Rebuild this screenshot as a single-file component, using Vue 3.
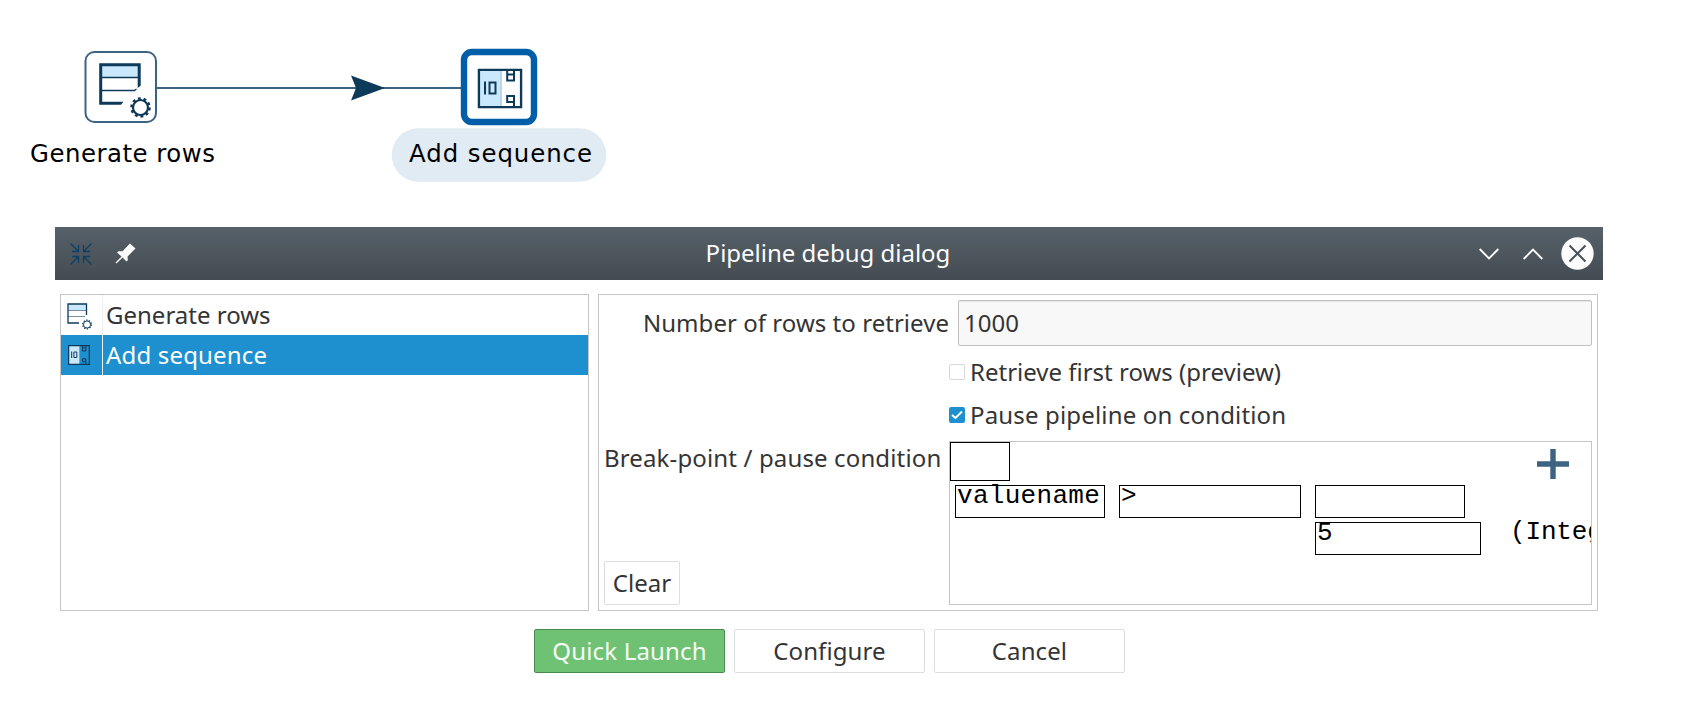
<script setup>
const transforms = ['Generate rows', 'Add sequence']
const selected = 'Add sequence'
</script>

<template>
  <main class="screen">
    <section class="canvas">
      <svg class="graph" width="1686" height="227" viewBox="0 0 1686 227">
        <defs>
          <symbol id="rows-icon" viewBox="0 0 54 56">
            <path d="M3 3H41V15H3Z" fill="#c9e8fb" />
            <path d="M2 15.500H41M2 28.500H36.500L38.500 27" fill="none" stroke="#0e3a5a" stroke-width="1.300" />
            <path d="M1.200 1.200H42.700V23.500L39.700 26V4.200H4.200V39.800H25.500L23 42.700H1.200Z" fill="#0e3a5a" />
            <circle cx="42.500" cy="45.500" r="7.500" fill="none" stroke="#0e3a5a" stroke-width="2.200" />
            <circle cx="42.500" cy="45.500" r="9" fill="none" stroke="#0e3a5a" stroke-width="2.600" stroke-dasharray="2.800 2.855" />
          </symbol>
          <symbol id="sequence-icon" viewBox="0 0 45 40">
            <path d="M1 1H23V39H1Z" fill="#c9e8fb" />
            <path d="M23.500 2V38" stroke="#8db2c9" stroke-width="1" />
            <path d="M1.300 1.300H43.700V38.700H1.300Z" fill="none" stroke="#0e3a5a" stroke-width="2.600" />
            <path d="M7.500 13V26M12 14H18V25H12ZM29.700 1V12H36.500V1M29.700 6H36.500M36.500 39V27.500H29.700V33.500H36.500" fill="none" stroke="#0e3a5a" stroke-width="2" />
          </symbol>
        </defs>
        <path d="M157 88H461" stroke="#3d6382" stroke-width="2" />
        <path d="M351 75.500L385 88L351 100.500L356 88Z" fill="#0e3a5a" />
        <rect x="85.500" y="52" width="70.500" height="70" rx="9" fill="#fff" stroke="#3d6382" stroke-width="2" />
        <use href="#rows-icon" x="98" y="62" width="54" height="56" />
        <rect x="464" y="52" width="70" height="70" rx="8" fill="#fff" stroke="#005da8" stroke-width="6.400" />
        <use href="#sequence-icon" x="477.500" y="68.500" width="45" height="40" />
        <rect x="391.700" y="128.300" width="214.600" height="53.400" rx="26.700" fill="#e1ebf4" />
        <text class="node" x="30" y="162" textLength="185">Generate rows</text>
        <text class="node" x="409" y="162" textLength="183">Add sequence</text>
      </svg>
    </section>

    <section class="dialog">
      <header class="titlebar">
        <svg class="collapse" width="22" height="22" viewBox="0 0 22 22"><path d="M.5 .5L8.500 8.500M2 8.500H8.500V2M21.500 .5L13.500 8.500M13.500 2V8.500H20M.5 21.500L8.500 13.500M2 13.500H8.500V20M21.500 21.500L13.500 13.500M20 13.500H13.500V20" /></svg>
        <svg class="pin" width="21" height="21" viewBox="0 0 21 21"><path d="M15 .5L20.500 5.500L12.500 13.500L12.800 17.200L11.500 18.500L7.500 14.500L1.500 20.500L.5 19.500L6.500 13.500L2 9.500L3.500 8.200L7.500 8.200Z" /></svg>
        <h1>Pipeline debug dialog</h1>
        <svg class="chevron" width="20" height="12" viewBox="0 0 20 12"><path d="M.7 1L10 10.500L19.300 1" /></svg>
        <svg class="chevron up" width="20" height="12" viewBox="0 0 20 12"><path d="M.7 11L10 1.500L19.300 11" /></svg>
        <svg class="close" width="33" height="33" viewBox="0 0 33 33"><circle cx="16.500" cy="16.500" r="16.200" fill="#fcfcfc" /><path d="M8.500 8.500L24.500 24.500M24.500 8.500L8.500 24.500" stroke="#475057" stroke-width="2" /></svg>
      </header>

      <div class="panels">
        <ul class="list">
          <li v-for="name in transforms" :key="name" :class="{ active: name === selected }">
            <span class="icon-cell">
              <svg v-if="name === 'Generate rows'" class="rows-small" width="26" height="27" viewBox="0 0 26 27">
                <path d="M1 1H20V7H1Z" fill="#c9e8fb" /><path d="M1 7.500H20M1 13.500H18" stroke="#7890a2" />
                <path d="M19.500 12V1H1V20H12" fill="none" stroke="#0e3a5a" stroke-width="1.300" />
                <circle cx="20" cy="21.500" r="3.600" fill="none" stroke="#0e3a5a" /><circle cx="20" cy="21.500" r="4.400" fill="none" stroke="#0e3a5a" stroke-width="1.200" stroke-dasharray="1.300 1.465" />
              </svg>
              <svg v-else class="seq-small" width="22" height="20" viewBox="0 0 45 40" preserveAspectRatio="none"><use href="#sequence-icon" width="45" height="40" /></svg>
            </span>
            <span class="name">{{ name }}</span>
          </li>
        </ul>

        <div class="settings">
          <div class="count-row">
            <label>Number of rows to retrieve</label>
            <div class="field">1000</div>
          </div>
          <div class="check first"><i class="box"></i><span>Retrieve first rows (preview)</span></div>
          <div class="check second"><i class="box on"><svg width="16" height="16" viewBox="0 0 16 16"><path d="M3 8L6.500 11L13 4.500" /></svg></i><span>Pause pipeline on condition</span></div>
          <div class="condition-row">
            <div class="side">
              <label>Break-point / pause condition</label>
              <button class="clear">Clear</button>
            </div>
            <div class="editor">
              <div class="tools">
                <span class="cell negate"></span>
                <svg width="32" height="30" viewBox="0 0 32 30"><path d="M16 0V30M0 15H32" stroke="#3d6382" stroke-width="5.400" /></svg>
              </div>
              <div class="expression">
                <span class="cell left"><b>valuename</b></span>
                <span class="cell operator"><b>&gt;</b></span>
                <span class="cell right"></span>
              </div>
              <div class="value-row">
                <span class="cell value"><b>5</b></span>
                <span class="type">(Integer)</span>
              </div>
            </div>
          </div>
        </div>
      </div>

      <footer>
        <button class="primary">Quick Launch</button>
        <button>Configure</button>
        <button>Cancel</button>
      </footer>
    </section>
  </main>
</template>

<style>
body { margin: 0; background: #fff; }
</style>

<style scoped>
* { box-sizing: border-box; }
.screen { width: 1686px; height: 710px; overflow: hidden; font: 24px/34px "Noto Sans", sans-serif; color: #343434; }
.canvas { height: 227px; }
.graph { display: block; }
.node { font: 24.4px "DejaVu Sans", sans-serif; fill: #000; }
.dialog { width: 1548px; margin-left: 55px; }
.titlebar { height: 53px; display: flex; align-items: center; background: linear-gradient(#566169, #454b52); color: #fcfcfc; padding: 0 9px 0 15px; }
h1 { flex: 1; margin: 0 0 2px; font-size: 24px; font-weight: 400; line-height: 34px; text-align: center; padding-left: 41px; }
.collapse { fill: none; stroke: #0e3f63; stroke-width: 1.3; }
.pin { margin-left: 23px; fill: #fcfcfc; }
.chevron { fill: none; stroke: #fcfcfc; stroke-width: 1.9; margin-right: 24px; }
.up { margin-right: 18px; }
.panels { display: flex; gap: 9px; margin: 14px 5px 0; height: 317px; }
.list { width: 529px; margin: 0; padding: 0; border: 1px solid #c6c6c6; list-style: none; }
li { height: 40px; display: flex; }
.icon-cell { width: 42px; border-right: 1px solid #eee; display: flex; align-items: center; padding-left: 6px; }
.rows-small { margin-top: 3px; }
.seq-small { margin-left: .5px; }
.name { padding-left: 3px; line-height: 40px; }
.active { background: #1e90cf; color: #fcfcfc; }
.active .name { letter-spacing: .17px; }
.settings { width: 1000px; border: 1px solid #c6c6c6; padding: 5px; }
.count-row { display: flex; height: 46px; justify-content: flex-end; }
.count-row label { line-height: 46px; margin-right: 9px; letter-spacing: .04px; }
.field { width: 634px; border: 1px solid #c1c1c1; border-radius: 2px; background: #f8f8f8; box-shadow: inset 0 1px #e7e7e7; padding-left: 5px; line-height: 44px; }
.check { display: flex; align-items: center; height: 34px; margin-left: 345px; }
.first { margin-top: 9px; }
.second { margin-top: 9px; letter-spacing: .16px; }
.check span { margin-left: 5px; }
.box { width: 16px; height: 16px; border: 1px solid #d8d8d8; border-radius: 2px; }
.box.on { border: 0; background: #1e90cf; }
.box svg { display: block; fill: none; stroke: #fff; stroke-width: 2; }
.condition-row { display: flex; height: 164px; margin-top: 9px; }
.side { width: 345px; display: flex; flex-direction: column; justify-content: space-between; align-items: flex-start; white-space: nowrap; }
.side label { line-height: 34px; letter-spacing: .14px; }
button { width: 191px; height: 44px; padding: 0; border: 1px solid #dedede; border-radius: 2px; background: #fff; color: #343434; font: 24px/34px "Noto Sans", sans-serif; letter-spacing: .1px; }
.clear { width: 76px; letter-spacing: 0; }
.editor { width: 643px; border: 1px solid #c6c6c6; overflow: hidden; color: #000; font: 26px/30px "Liberation Mono", monospace; }
.tools { display: flex; justify-content: space-between; height: 43px; padding-right: 22px; }
.tools svg { margin-top: 7px; }
.cell { display: block; height: 33px; border: 1px solid #000; flex: none; }
.cell b { display: block; font-weight: 400; margin-top: -5px; padding-left: 1px; letter-spacing: .3px; }
.negate { width: 60px; height: 39px; }
.expression { display: flex; padding-left: 5px; gap: 14px; height: 37px; }
.left, .right { width: 150px; }
.operator { width: 182px; }
.value-row { display: flex; padding-left: 365px; }
.value { width: 166px; }
.type { margin: -5px 0 0 29px; letter-spacing: -.15px; }
footer { display: flex; gap: 9px; margin: 18px 0 0 479px; }
.primary { background: #6fc274; border-color: #488a50; color: #f5fbf5; letter-spacing: .17px; }
</style>
